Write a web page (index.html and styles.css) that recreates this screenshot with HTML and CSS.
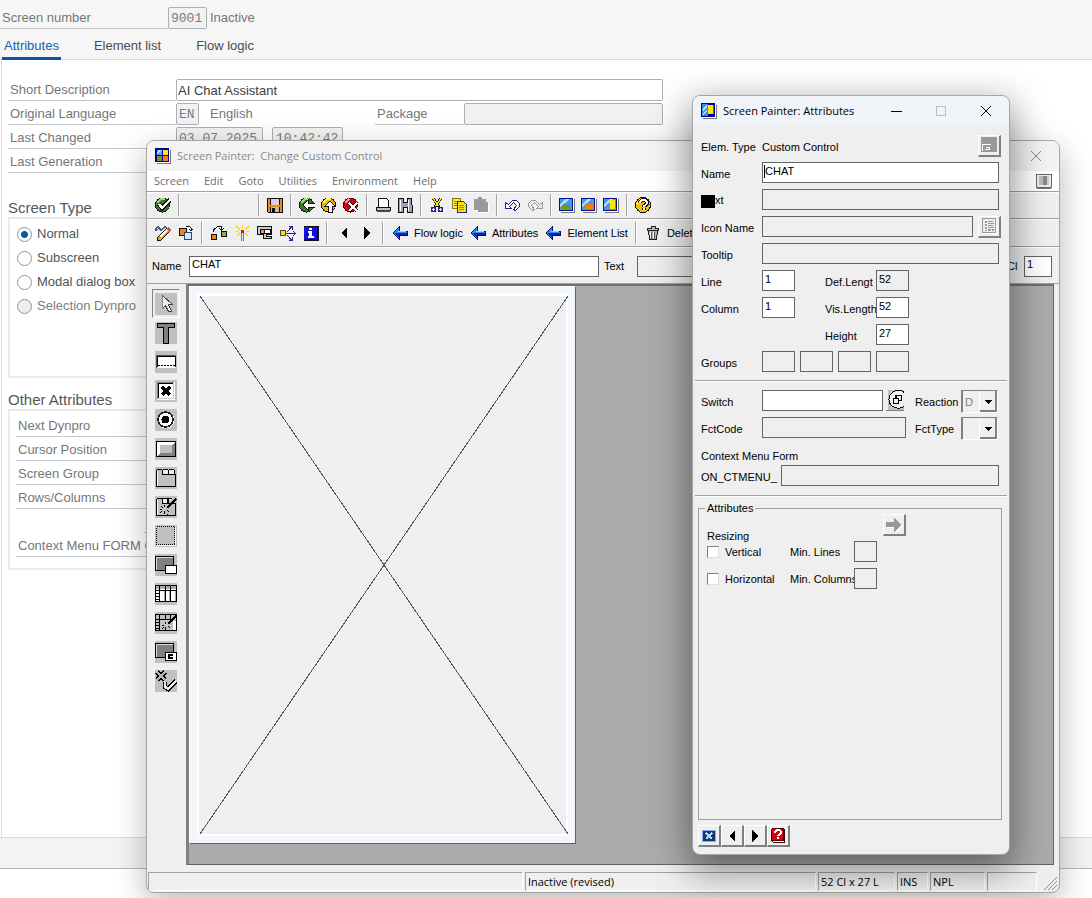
FILE: index.html
```html
<!DOCTYPE html>
<html lang="en">
<head>
<meta charset="utf-8">
<title>Screen Painter</title>
<link rel="stylesheet" href="styles.css">
</head>
<body>
<svg class="sprite" aria-hidden="true">
  <defs>
    <symbol id="i-app" viewBox="0 0 16 16"><path fill="#777" d="M2 2h14v14H2z"/><path fill="#fff" d="M0 0h15v15H0z"/><path fill="#00009f" d="M0 0h14v14H0z"/><path fill="#4aa8f4" d="M2 2h5v5H2z"/><path fill="#d5efff" d="M2 6V4l2-2h2z"/><path fill="#ffe600" d="M8 2h5v5H8z"/><path fill="#7aa000" d="M2 8h5v5H2z"/><path fill="#ff7a00" d="M8 8h5v5H8z"/></symbol>
    <symbol id="i-app2" viewBox="0 0 16 16"><path fill="#777" d="M2 2h14v14H2z"/><path fill="#fff" d="M0 0h15v15H0z"/><path fill="#00009f" d="M0 0h14v14H0z"/><path fill="#2f8fe8" d="M1 1h6v12H1z"/><path fill="#b5e0ff" d="M2 5l4-3v2L2 8zM2 10l4-3v2l-4 3z"/><path fill="#ffe600" d="M7 2h5v9H7z"/><path fill="#7a6000" d="M7 11h6V2h-1v9z"/></symbol>
    <symbol id="i-check" viewBox="0 0 16 16"><circle cx="7.500" cy="8" r="7.500" fill="#111"/><circle cx="7.500" cy="8" r="6.500" fill="#2f7d20"/><path d="M2 6l4-4h4" stroke="#9ad27a" fill="none" stroke-width="2"/><path d="M4 7l3 4 8-8" stroke="#111" stroke-width="4.500" fill="none"/><path d="M4 7l3 4 8-8" stroke="#fff" stroke-width="2.500" fill="none"/></symbol>
    <symbol id="i-save" viewBox="0 0 16 16"><path d="M0 1h16v15H1l-1-1z" fill="#111"/><path d="M1 2h2v13H1zM13 2h2v13h-2zM3 8h10v2H3z" fill="#f08a10"/><path d="M4 2h8v6H4z" fill="#d7d0e8"/><path d="M4 10h8v5H4z" fill="#bbb"/><path d="M5 11h3v4H5z" fill="#111"/></symbol>
    <symbol id="i-back" viewBox="0 0 16 16"><circle cx="7.500" cy="8" r="7.500" fill="#111"/><circle cx="7.500" cy="8" r="6.500" fill="#2f7d20"/><path d="M2 6l4-4h4" stroke="#a8dc80" fill="none" stroke-width="2"/><path d="M4 8l5-5v3h7v4H9v3z" fill="#fff" stroke="#111"/></symbol>
    <symbol id="i-exit" viewBox="0 0 16 16"><circle cx="7.500" cy="8" r="7.500" fill="#111"/><circle cx="7.500" cy="8" r="6.500" fill="#f0b400"/><path d="M2 6l4-4h4" stroke="#fff36a" fill="none" stroke-width="2"/><path d="M9 4l5 5h-3v6H7V9H4z" fill="#fff" stroke="#111"/></symbol>
    <symbol id="i-cancel" viewBox="0 0 16 16"><circle cx="7.500" cy="8" r="7.500" fill="#400"/><circle cx="7.500" cy="8" r="6.500" fill="#d80010"/><path d="M2 6l4-4" stroke="#ff9090" fill="none" stroke-width="2"/><path d="M6 6l8 8M14 6l-8 8" stroke="#111" stroke-width="3.500"/><path d="M6 6l8 8M14 6l-8 8" stroke="#fff" stroke-width="2"/></symbol>
    <symbol id="i-print" viewBox="0 0 16 16"><path d="M3 1h8l2 2v7H3z" fill="#fff" stroke="#111"/><path d="M1 10h14v3H1z" fill="#b9bdd8" stroke="#111"/><path d="M2 13h13v2H2z" fill="#444"/></symbol>
    <symbol id="i-find" viewBox="0 0 16 16"><path d="M2 1h4v4h4V1h4l1 7v7h-5v-5H6v5H1V8z" fill="#9aa0c0" stroke="#111"/><path d="M3 3h1v11H3zM11 3h1v11h-1z" fill="#fff"/></symbol>
    <symbol id="i-cut" viewBox="0 0 16 16"><path d="M4 1l6 9M12 1L6 10" stroke="#111" stroke-width="3"/><path d="M4 1l5 8M12 1L7 9" stroke="#ffe100" stroke-width="1.500"/><circle cx="4.500" cy="12.500" r="2" fill="none" stroke="#24248c" stroke-width="1.500"/><circle cx="11.500" cy="12.500" r="2" fill="none" stroke="#24248c" stroke-width="1.500"/></symbol>
    <symbol id="i-copy" viewBox="0 0 16 16"><path d="M1.500 1.500h8v10h-8z" fill="#ffe75a" stroke="#8a7800"/><path d="M3 4.500h5M3 6.500h3M3 8.500h3" stroke="#8a7800"/><path d="M6.500 4.500h6l3 3v8h-9z" fill="#ffe100" stroke="#24248c"/><path d="M8 8.500h5M8 10.500h5M8 12.500h5" stroke="#a08800"/></symbol>
    <symbol id="i-paste" viewBox="0 0 16 16"><path d="M2 3h4V1h4v2h4v3h2v10H6v-2H2z" fill="#fff"/><path d="M1 2h4V0h4v2h4v3h2v10H5v-2H1z" fill="#999"/></symbol>
    <symbol id="i-undo" viewBox="0 0 16 16"><path d="M.5 5.500v6h6l-2-2 4-4 3 3-3 4 2 1 4-4v-3l-3-3h-4l-4 4z" fill="#fff" stroke="#24248c"/></symbol>
    <symbol id="i-redo" viewBox="0 0 16 16"><path d="M15.500 5.500v6h-6l2-2-4-4-3 3 3 4-2 1-4-4v-3l3-3h4l4 4z" fill="#eee" stroke="#999"/></symbol>
    <symbol id="i-win" viewBox="0 0 16 16"><path d="M2 2h14v14H2z" fill="#777"/><path d="M0 1h15v14H0z" fill="#fff"/><path d="M0 1h14v13H0z" fill="#00108c"/><path d="M1 2h12v11H1z" fill="#3f9cf0"/><path d="M1 7l6-5h4L1 10z" fill="#b5dcff"/></symbol>
    <symbol id="i-help" viewBox="0 0 16 16"><circle cx="8" cy="8" r="8" fill="#111"/><circle cx="8" cy="8" r="7" fill="#f4c000"/><path d="M2 7l4-5" stroke="#fff" stroke-width="2"/><path d="M5 6c0-4 7-4 7 0 0 2-3 2-3 4M9 11v2" fill="none" stroke="#111" stroke-width="4"/><path d="M5 6c0-4 7-4 7 0 0 2-3 2-3 4M9 11v2" fill="none" stroke="#fff" stroke-width="2"/></symbol>
    <symbol id="i-edit" viewBox="0 0 16 16"><path d="M0 4l3-2 3 3 4-3 2 1M0 6l2-2" stroke="#557" stroke-width="1.500" fill="none"/><path d="M3 12L12 3l3 3-9 9-4 1z" fill="#f0a020" stroke="#111"/><path d="M11 4l2-2 3 3-2 2z" fill="#d05050"/><path d="M5 12l7-7" stroke="#fff" stroke-width="1.500"/></symbol>
    <symbol id="i-swap" viewBox="0 0 16 16"><path d="M1.500 3.500h7v7h-7z" fill="#f08a10" stroke="#111"/><path d="M6.500 7.500h7v7h-7z" fill="#d5e6ff" stroke="#24487c"/><path d="M8 2c3-2 6 0 5 4M11 4l2 2 2-2" fill="none" stroke="#111"/></symbol>
    <symbol id="i-flow" viewBox="0 0 16 16"><path d="M.5 9.500h5v5h-5z" fill="#f08a10" stroke="#111"/><path d="M10.500 6.500h5v5h-5z" fill="#8ab040" stroke="#111"/><path d="M2.500 7V5l4-3.500h4V4M8 3l2.500 2L13 3" fill="none" stroke="#111"/></symbol>
    <symbol id="i-wand" viewBox="0 0 16 16"><path d="M8.500 0v4M2 1l4 4M15 1l-4 4M1 6.500h4M12 6.500h4M3 11l3-3M14 11l-3-3" stroke="#ffe800" stroke-width="1.500"/><path d="M7 8h3v8H7z" fill="#777"/><path d="M8 8h1v8H8z" fill="#d5f0ff"/><path d="M7 5h3v3H7z" fill="#e01010"/></symbol>
    <symbol id="i-clamp" viewBox="0 0 16 16"><path d="M.5 1.500h14v8h-5v2h5v2h-8v-4h-6z" fill="#c5c9de" stroke="#111"/><path d="M3.500 4.500h10v4h-10z" fill="#fff" stroke="#111"/><path d="M4 5h3v3H4z" fill="#f09030"/><path d="M7.500 4v4" stroke="#111"/></symbol>
    <symbol id="i-net" viewBox="0 0 16 16"><path d="M.5 5.500h5v5h-5z" fill="#ffe100" stroke="#444"/><path d="M6 8.500h9M7 7l4.500-5M7 10l4.500 5M9 1.500h3V5M9 15.500h3V12M13 6l2.500 2.500L13 11" fill="none" stroke="#24248c"/></symbol>
    <symbol id="i-info" viewBox="0 0 16 16"><path d="M1 1h15v15H1z" fill="#111"/><path d="M1 2h13v12H1z" fill="#1010d8"/><path d="M6 3h3v2H6zM5 6h4v5h2v2H5v-2h1V8H5z" fill="#fff"/></symbol>
    <symbol id="i-left" viewBox="0 0 16 16"><path d="M11 2v12L5 8z" fill="#000"/></symbol>
    <symbol id="i-right" viewBox="0 0 16 16"><path d="M5 2v12l6-6z" fill="#000"/></symbol>
    <symbol id="i-arrow" viewBox="0 0 16 16"><path d="M1 8l6-6v4h8v4H7v4z" fill="#2a8cf0" stroke="#00106c"/><path d="M2 8h13v2H7v3z" fill="#1020b0"/><path d="M6 6.500h8" stroke="#9ad6ff"/></symbol>
    <symbol id="i-trash" viewBox="0 0 16 16"><path d="M6.500 1.500h4v2h3v2h-11v-2h4z" fill="#bbb" stroke="#222"/><path d="M3.500 5.500h9l-1 9h-7z" fill="#b7b7c4" stroke="#222"/><path d="M6.500 7v7M9.500 7v7" stroke="#555"/><path d="M5.500 7v6M8.500 7v6" stroke="#fff"/></symbol>
    <symbol id="p-ptr" viewBox="0 0 22 22"><path d="M7.500 2.500v13l3-3 3 6h3l-3-7h4z" fill="#eee" stroke="#444"/><path d="M7.500 2.500v13" stroke="#888"/></symbol>
    <symbol id="p-text" viewBox="0 0 22 22"><path d="M2.500 1.500h17v4h-6v16h-5v-16h-6z" fill="#808080" stroke="#000"/></symbol>
    <symbol id="p-field" viewBox="0 0 22 22"><path d="M1 4h20v13H1z" fill="#fff"/><path d="M1.500 17V4.500H21" fill="none" stroke="#555"/><path d="M2.500 16V5.500H20v10" fill="none" stroke="#000"/><path d="M3 14.500h17" stroke="#000" stroke-dasharray="2 1"/></symbol>
    <symbol id="p-box" viewBox="0 0 22 22"><path d="M2 2h18v18H2z" fill="#fff"/><path d="M2.500 19V2.500H19" fill="none" stroke="#808080"/><path d="M3.500 18V3.500H18" fill="none" stroke="#000"/><path d="M18.500 4v14.500H4" fill="none" stroke="#ccc"/><path d="M7 7l8 8M15 7l-8 8" stroke="#000" stroke-width="3"/></symbol>
    <symbol id="p-radio" viewBox="0 0 22 22"><circle cx="11" cy="11" r="8.500" fill="#fff"/><circle cx="10.500" cy="10.500" r="7.500" fill="#fff" stroke="#222" stroke-width="1.500"/><circle cx="10.500" cy="10.500" r="4" fill="#000"/></symbol>
    <symbol id="p-btn" viewBox="0 0 22 22"><path d="M1.500 3.500h19v15h-19z" fill="#aaa" stroke="#000"/><path d="M2 4h18l-4 4H6v7l-4 3z" fill="#fff"/><path d="M20 4v14H2l4-4h10V8z" fill="#808080"/><path d="M5 7h12v8H5z" fill="#c0c0c0"/></symbol>
    <symbol id="p-tab" viewBox="0 0 22 22"><path d="M1.500 19.500V3.500l1-1h4l1 1v4h13v12z" fill="#c0c0c0" stroke="#000"/><path d="M7.500 7V3.500l1-1h4l1 1V7M13.500 7V3.500l1-1h4l1 1V7" fill="#eee" stroke="#000"/><path d="M2.500 19V4" stroke="#fff"/></symbol>
    <symbol id="p-tabwiz" viewBox="0 0 22 22"><path d="M1.500 19.500V3.500l1-1h4l1 1v4h13v12z" fill="#c0c0c0" stroke="#000"/><path d="M7.500 7V2.500h5V7M13.500 7V2.500h3" fill="#eee" stroke="#000"/><path d="M2.500 19V4" stroke="#fff"/><path d="M21 3l-9 9" stroke="#000" stroke-width="2"/><path d="M5 13.500h2M9.500 9v2M9.500 15v3M5 17l2-2M12 14l2 2M6 10l2 2M12 18h1" stroke="#000"/></symbol>
    <symbol id="p-sub" viewBox="0 0 22 22"><path d="M1.500 1.500h18v18h-18z" fill="none" stroke="#000" stroke-dasharray="1 1"/><path d="M1 20.500h19.500V2" fill="none" stroke="#fff"/></symbol>
    <symbol id="p-cont" viewBox="0 0 22 22"><path d="M.5 2.500h18v14H.5z" fill="#808080" stroke="#000"/><path d="M1.500 16V3.500H18" fill="none" stroke="#ddd"/><path d="M10.500 11.500h11v8h-11z" fill="#fff" stroke="#000"/></symbol>
    <symbol id="p-table" viewBox="0 0 22 22"><path d="M.5 2.500h21v16H.5z" fill="#fff" stroke="#000"/><path d="M1 3h20v3H1z" fill="#aaa"/><path d="M1 7.500h20M4.500 3v16M10.500 3v16M15.500 3v16M1 10.500h3M1 13.500h3M1 16.500h3" stroke="#000"/><path d="M9.500 8v10M14.500 8v10M20.500 8v10" stroke="#aaa"/></symbol>
    <symbol id="p-tabwz" viewBox="0 0 22 22"><path d="M.5 2.500h21v16H.5z" fill="#c0c0c0" stroke="#000"/><path d="M18 9h3v9h-3z" fill="#fff"/><path d="M1 7.500h15M4.500 3v16M10.500 3v5M15.500 3v4M1 10.500h3M1 13.500h3M1 16.500h3" stroke="#000"/><path d="M22 3l-9 9" stroke="#000" stroke-width="2"/><path d="M7 13.500h2M10.500 10v2M10.500 15v3M7 17l2-2M13 14l2 2" stroke="#000"/></symbol>
    <symbol id="p-ctrl" viewBox="0 0 22 22"><path d="M.5 2.500h18v14H.5z" fill="#808080" stroke="#000"/><path d="M1.500 16V3.500H18" fill="none" stroke="#ddd"/><path d="M10.500 11.500h11v8h-11z" fill="#fff" stroke="#000"/><path d="M18 14h-4v3h4" fill="none" stroke="#000" stroke-width="1.500"/></symbol>
    <symbol id="p-ok" viewBox="0 0 22 22"><path d="M2 2l8 8M10 2l-8 8" stroke="#000" stroke-width="4.500"/><path d="M2 2l8 8M10 2l-8 8" stroke="#b5b5b5" stroke-width="2.500"/><path d="M10 12v5l3 2 8-8" fill="none" stroke="#000" stroke-width="4.500"/><path d="M10 12v5l3 2 8-8" fill="none" stroke="#eee" stroke-width="2.500"/></symbol>
    <symbol id="i-layout" viewBox="0 0 16 16"><path d="M.5 1.500h15v13H.5z" fill="#eee" stroke="#666"/><path d="M3 3h4v9H3z" fill="#bbb"/><path d="M7 3h4v9H7z" fill="#888"/><path d="M11 3h2v9h-2z" fill="#ccc"/><path d="M1 15.500h14" stroke="#777"/></symbol>
    <symbol id="i-elem" viewBox="0 0 16 16"><path d="M0 0h16v15H0z" fill="#999"/><path d="M1.500 14V7.500H10M4 12.500h4.500V10H5" fill="none" stroke="#fff"/></symbol>
    <symbol id="i-list" viewBox="0 0 16 16"><path d="M2.500 1.500h13v14h-13z" fill="none" stroke="#fff"/><path d="M1.500.5h13v14h-13z" fill="#eee" stroke="#999"/><path d="M4 3h2v2H4zM4 6h2v2H4zM4 9h2v2H4zM4 12h2v1H4zM7 3h5v1H7zM7 5h6v1H7zM7 7h5v1H7zM7 9h6v1H7zM7 11h3v2H7zM11 11h2v2h-2z" fill="#999"/></symbol>
    <symbol id="i-match" viewBox="0 0 18 20"><path d="M2 0h16v20H2z" fill="#c0c0c0"/><path d="M18 2.500c-4-4-15-2-15 7s11 10 15 7" fill="#eee" stroke="#000"/><path d="M7.500 8.500h5v5h-5zM10 8V5.500h5.500v5H13" fill="none" stroke="#000" stroke-width="1.500"/></symbol>
    <symbol id="i-go" viewBox="0 0 16 16"><path d="M1 7h9V3l6 6-6 6v-4H1z" fill="#fff"/><path d="M0 5h8V1l7 7-7 7v-5H0z" fill="#999"/></symbol>
    <symbol id="i-close" viewBox="0 0 16 16"><path d="M1.500 2.500h13v11h-13z" fill="#15386f" stroke="#8aa8f0"/><path d="M5 5l6 6M11 5l-6 6" stroke="#b5d5ff" stroke-width="1.500"/></symbol>
    <symbol id="i-bookhelp" viewBox="0 0 16 16"><path d="M2 0h12l1 2v13H3l-2-2V1z" fill="#400"/><path d="M2 1h11v11H2z" fill="#d80010"/><path d="M3 13.500h11" stroke="#fff"/><path d="M5 5c0-4 6-4 6 0 0 2-3 1-3 3M8 9v2" fill="none" stroke="#fff" stroke-width="2"/></symbol>
  </defs>
</svg>

<main class="page">
  <header class="head">
    <div class="head-row">
      <label class="lbl" for="scrno">Screen number</label>
      <input class="ro mono w4" id="scrno" value="9001" readonly>
      <span>Inactive</span>
    </div>
    <nav class="tabs">
      <a class="tab active" href="#a">Attributes</a>
      <a class="tab" href="#e">Element list</a>
      <a class="tab" href="#f">Flow logic</a>
    </nav>
  </header>
  <section class="sheet">
    <div class="frow"><label class="lbl" for="sd">Short Description</label><input class="rw" id="sd" value="AI Chat Assistant"></div>
    <div class="frow"><label class="lbl" for="ol">Original Language</label><input class="ro mono w2" id="ol" value="EN" readonly><span class="lang">English</span><label class="lbl pkg" for="pk">Package</label><input class="ro grow" id="pk" readonly></div>
    <div class="frow"><label class="lbl" for="lc">Last Changed</label><input class="ro mono w10" id="lc" value="03.07.2025" readonly><input class="ro mono w8" value="10:42:42" aria-label="Time changed" readonly></div>
    <div class="frow"><label class="lbl" for="lg">Last Generation</label><input class="ro mono w10" id="lg" readonly></div>

    <h2>Screen Type</h2>
    <div class="box types">
      <label><input type="radio" name="t" checked>Normal</label>
      <label><input type="radio" name="t">Subscreen</label>
      <label><input type="radio" name="t">Modal dialog box</label>
      <label class="off"><input type="radio" name="t" disabled>Selection Dynpro</label>
    </div>
    <h2>Other Attributes</h2>
    <div class="box others">
      <span class="lbl">Next Dynpro</span>
      <span class="lbl">Cursor Position</span>
      <span class="lbl">Screen Group</span>
      <span class="lbl">Rows/Columns</span>
      <span class="lbl blank"></span>
      <span class="lbl">Context Menu FORM ON_CTMENU_</span>
    </div>
  </section>
  <footer class="foot"></footer>
</main>

<section class="win painter">
  <div class="titlebar inactive"><svg class="ic16"><use href="#i-app"/></svg><h1>Screen Painter:&nbsp; Change Custom Control</h1><button class="cap" aria-label="Close"><svg class="cap-ic" viewBox="0 0 12 12"><path d="M1 1l10 10M11 1L1 11"/></svg></button></div>
  <nav class="menubar"><a href="#s">Screen</a><a href="#ed">Edit</a><a href="#g">Goto</a><a href="#u">Utilities</a><a href="#en">Environment</a><a href="#h">Help</a><svg class="ic16 end"><use href="#i-layout"/></svg></nav>
  <div class="bar first">
    <button aria-label="Enter"><svg><use href="#i-check"/></svg></button><i class="sep"></i><input class="cmd" aria-label="Command"><i class="sep"></i>
    <button aria-label="Save"><svg><use href="#i-save"/></svg></button><i class="sep"></i>
    <button aria-label="Back"><svg><use href="#i-back"/></svg></button><button aria-label="Exit"><svg><use href="#i-exit"/></svg></button><button aria-label="Cancel"><svg><use href="#i-cancel"/></svg></button><i class="sep"></i>
    <button aria-label="Print"><svg><use href="#i-print"/></svg></button><button aria-label="Find"><svg><use href="#i-find"/></svg></button><i class="sep"></i>
    <button aria-label="Cut"><svg><use href="#i-cut"/></svg></button><button aria-label="Copy"><svg><use href="#i-copy"/></svg></button><button aria-label="Paste"><svg><use href="#i-paste"/></svg></button><i class="sep"></i>
    <button aria-label="Undo"><svg><use href="#i-undo"/></svg></button><button aria-label="Redo"><svg><use href="#i-redo"/></svg></button><i class="sep"></i>
    <button aria-label="Layout 1"><svg viewBox="0 0 16 16"><use href="#i-win"/><path d="M3 8h8v4H3z" fill="#7a9800"/></svg></button><button aria-label="Layout 2"><svg viewBox="0 0 16 16"><use href="#i-win"/><path d="M4 7h8v5H4z" fill="#ff7a00"/></svg></button><button aria-label="Layout 3"><svg viewBox="0 0 16 16"><use href="#i-win"/><path d="M7 3h5v9H7z" fill="#ffe600"/></svg></button><i class="sep"></i>
    <button aria-label="Help"><svg><use href="#i-help"/></svg></button>
  </div>
  <div class="bar second">
    <button aria-label="Change"><svg><use href="#i-edit"/></svg></button><button aria-label="Other object"><svg><use href="#i-swap"/></svg></button><i class="sep"></i>
    <button aria-label="Check"><svg><use href="#i-flow"/></svg></button><button aria-label="Activate"><svg><use href="#i-wand"/></svg></button><button aria-label="Test"><svg><use href="#i-clamp"/></svg></button><button aria-label="Where used"><svg><use href="#i-net"/></svg></button><button aria-label="Information"><svg><use href="#i-info"/></svg></button><i class="sep"></i>
    <button aria-label="Previous"><svg><use href="#i-left"/></svg></button><button aria-label="Next"><svg><use href="#i-right"/></svg></button><i class="sep"></i>
    <button><svg><use href="#i-arrow"/></svg>Flow logic</button><button><svg><use href="#i-arrow"/></svg>Attributes</button><button><svg><use href="#i-arrow"/></svg>Element List</button><i class="sep"></i>
    <button><svg><use href="#i-trash"/></svg>Delete</button>
  </div>
  <div class="namebar">
    <label for="nm">Name</label><input id="nm" class="in nm" value="CHAT">
    <label for="tx" class="txl">Text</label><input id="tx" class="in dis tx" readonly>
    <label for="cl">Cl</label><input id="cl" class="in cl" value="1">
  </div>
  <div class="work">
    <div class="palette">
      <button class="on" aria-label="Pointer"><svg><use href="#p-ptr"/></svg></button>
      <button aria-label="Text field"><svg><use href="#p-text"/></svg></button>
      <button aria-label="Input field"><svg><use href="#p-field"/></svg></button>
      <button aria-label="Checkbox"><svg><use href="#p-box"/></svg></button>
      <button aria-label="Radio button"><svg><use href="#p-radio"/></svg></button>
      <button aria-label="Pushbutton"><svg><use href="#p-btn"/></svg></button>
      <button aria-label="Tabstrip"><svg><use href="#p-tab"/></svg></button>
      <button aria-label="Tabstrip wizard"><svg><use href="#p-tabwiz"/></svg></button>
      <button aria-label="Box"><svg><use href="#p-sub"/></svg></button>
      <button aria-label="Subscreen"><svg><use href="#p-cont"/></svg></button>
      <button aria-label="Table control"><svg><use href="#p-table"/></svg></button>
      <button aria-label="Table wizard"><svg><use href="#p-tabwz"/></svg></button>
      <button aria-label="Custom control"><svg><use href="#p-ctrl"/></svg></button>
      <button aria-label="Status icon"><svg><use href="#p-ok"/></svg></button>
    </div>
    <div class="canvas">
      <div class="form"><svg class="cross" viewBox="0 0 100 100" preserveAspectRatio="none"><path d="M0 0L100 100M100 0L0 100"/></svg></div>
    </div>
  </div>
  <div class="status"><span class="s1"></span><span class="s2">Inactive (revised)</span><span class="s3">52 Cl x 27 L</span><span class="s4">INS</span><span class="s5">NPL</span><span class="s6"></span><svg class="grip" viewBox="0 0 16 16"><path d="M2 15L15 2M6 15l9-9M10 15l5-5"/></svg></div>
</section>

<section class="win attrs">
  <div class="titlebar"><svg class="ic16"><use href="#i-app2"/></svg><h1>Screen Painter: Attributes</h1>
    <button class="cap" aria-label="Minimize"><svg class="cap-ic" viewBox="0 0 12 12"><path d="M1 6.500h11"/></svg></button>
    <button class="cap faint" aria-label="Maximize"><svg class="cap-ic" viewBox="0 0 12 12"><rect x="1.500" y="1.500" width="9" height="9"/></svg></button>
    <button class="cap" aria-label="Close"><svg class="cap-ic" viewBox="0 0 12 12"><path d="M1 1l10 10M11 1L1 11"/></svg></button></div>
  <div class="rows">
    <div class="r"><span class="k">Elem. Type</span><span class="grow val">Custom Control</span><button class="sq" aria-label="Element type"><svg><use href="#i-elem"/></svg></button></div>
    <div class="r"><label class="k" for="a1">Name</label><span class="caret grow"><input id="a1" class="in grow" value="CHAT"></span></div>
    <div class="r"><label class="k" for="a2"><b class="blk"></b>xt</label><input id="a2" class="in dis grow" readonly></div>
    <div class="r"><label class="k" for="a3">Icon Name</label><input id="a3" class="in dis grow" readonly><button class="sq" aria-label="Icon list"><svg><use href="#i-list"/></svg></button></div>
    <div class="r"><label class="k" for="a4">Tooltip</label><input id="a4" class="in dis grow" readonly></div>
    <div class="r"><label class="k" for="a5">Line</label><input id="a5" class="in n" value="1"><label class="k2" for="a6">Def.Lengt</label><input id="a6" class="in dis n" value="52" readonly></div>
    <div class="r"><label class="k" for="a7">Column</label><input id="a7" class="in n" value="1"><label class="k2" for="a8">Vis.Length</label><input id="a8" class="in n" value="52"></div>
    <div class="r"><span class="k"></span><span class="n"></span><label class="k2" for="a9">Height</label><input id="a9" class="in n" value="27"></div>
    <div class="r groups"><span class="k">Groups</span><input class="in dis n" aria-label="Group 1" readonly><input class="in dis n" aria-label="Group 2" readonly><input class="in dis n" aria-label="Group 3" readonly><input class="in dis n" aria-label="Group 4" readonly></div>
  </div>
  <hr>
  <div class="rows second-rows">
    <div class="r"><label class="k" for="b1">Switch</label><span class="swf"><input id="b1" class="in grow"><button class="match" aria-label="Value help"><svg><use href="#i-match"/></svg></button></span><label class="k3" for="b2">Reaction</label><select id="b2" class="sel"><option>D</option></select></div>
    <div class="r"><label class="k" for="b3">FctCode</label><span class="swf"><input id="b3" class="in dis grow" readonly></span><label class="k3" for="b4">FctType</label><select id="b4" class="sel"><option></option></select></div>
    <div class="r"><span class="val">Context Menu Form</span></div>
    <div class="r ctx"><label class="k" for="b5">ON_CTMENU_</label><input id="b5" class="in dis grow" readonly></div>
  </div>
  <hr>
  <fieldset>
    <legend>Attributes</legend>
    <button class="sq go" aria-label="Continue"><svg><use href="#i-go"/></svg></button>
    <p>Resizing</p>
    <div class="z"><label class="ck"><input type="checkbox">Vertical</label><label class="k4" for="c1">Min. Lines</label><input id="c1" class="in dis" readonly></div>
    <div class="z"><label class="ck"><input type="checkbox">Horizontal</label><label class="k4" for="c2">Min. Columns</label><input id="c2" class="in dis" readonly></div>
  </fieldset>
  <div class="btns"><button class="sq" aria-label="Close"><svg><use href="#i-close"/></svg></button><button class="sq" aria-label="Previous"><svg><use href="#i-left"/></svg></button><button class="sq" aria-label="Next"><svg><use href="#i-right"/></svg></button><button class="sq" aria-label="Help"><svg><use href="#i-bookhelp"/></svg></button></div>
</section>
</body>
</html>
```
FILE: styles.css
```css
* { box-sizing: border-box; }
html, body { height: 100%; margin: 0; }
body { position: relative; overflow: hidden; background: #fff; font: 13px/16px "Liberation Sans", Arial, sans-serif; color: #74777a; }
h1, h2, p { margin: 0; font-weight: normal; }
a { color: inherit; text-decoration: none; }
button { font: inherit; color: inherit; background: none; border: 0; padding: 0; margin: 0; }
input { font: inherit; color: inherit; margin: 0; border-radius: 0; outline: 0; min-width: 0; }
.sprite { position: absolute; width: 0; height: 0; }
.grow { flex: 1; }

/* page behind the windows */
.page { display: flex; flex-direction: column; height: 100%; padding-bottom: 29px; }
.head { background: #f6f6f6; border-bottom: 1px solid #d9d9d9; }
.head-row { display: flex; align-items: center; height: 29px; padding-top: 7px; }
.head-row .lbl { width: 168px; padding-left: 2px; }
.head-row span { padding-left: 3px; }
.lbl { height: 22px; line-height: 22px; border-bottom: 1px solid #c4c7ca; white-space: nowrap; flex: none; }
.ro, .rw { height: 22px; padding: 0 2px; border: 1px solid #a9b0b8; border-radius: 2px; background: #f2f2f2; color: #7b7b7b; }
.rw { background: #fff; color: #3a3d40; flex: 1; padding: 0 1px; }
.mono { font-family: "Liberation Mono", monospace; }
.w2 { width: 23px; }
.w4 { width: 39px; }
.w8 { width: 71px; margin-left: 9px; padding: 0 3px; }
.w10 { width: 87px; }
.tabs { display: flex; gap: 31px; height: 30px; padding-left: 2px; color: #4a4d50; }
.tab { height: 31px; padding: 9px 2px 0 2px; }
.active { color: #1661ae; border-bottom: 3px solid #0a56a5; }
.sheet { flex: 1; min-height: 0; margin-left: 1px; padding: 18px 7px; border-left: 1px solid #dcdcdc; }
.frow { display: flex; align-items: center; height: 24px; width: 655px; max-width: 100%; margin-left: -1px; }
.frow .lbl { width: 168px; padding-left: 2px; }
.lang { width: 176px; padding-left: 11px; }
.frow .pkg { width: 89px; }
h2 { font-size: 15px; line-height: 18px; color: #54575a; }
.sheet h2 { margin: 25px 0 0 -1px; }
.box { width: 400px; margin: 0 0 0 -1px; border: 2px solid #ebebeb; }
.types { height: 161px; padding: 3px 7px; color: #515456; }
.types label { display: flex; align-items: center; gap: 5px; height: 24px; }
.types input { appearance: none; width: 15px; height: 15px; border: 1px solid #8d969f; border-radius: 50%; background: #fff; }
.types input:checked { background: radial-gradient(circle, #0a56a5 3px, #fff 4px); }
.types input:disabled { background: #eee; }
.types .off { color: #7b7e81; }
.sheet .box + h2 { margin-top: 13px; }
.others { display: flex; flex-direction: column; gap: 2px; padding: 4px 6px 11px; }
.others .lbl { padding-left: 2px; }
.others .blank { margin-left: 128px; }
.foot { flex: none; height: 32px; background: #f3f3f3; border-top: 1px solid #d9d9d9; border-bottom: 1px solid #b5b5b5; }

/* shared window parts */
.win { position: absolute; display: flex; flex-direction: column; overflow: hidden; border: 1px solid #a6a6a6; border-radius: 8px; background: #efefef; color: #000; font: 11px/14px "Liberation Sans", Arial, sans-serif; }
.titlebar { display: flex; align-items: center; flex: none; height: 30px; padding-left: 8px; background: #f0f3f8; }
.titlebar h1 { flex: 1; padding-left: 6px; font: 11px/16px "Open Sans", "Noto Sans", sans-serif; white-space: nowrap; }
.inactive { background: #f3f3f3; color: #8a8a8a; }
.ic16, .bar svg, .sq svg { width: 16px; height: 16px; flex: none; }
.ic16, .bar svg, .sq svg, .match svg, .palette svg { shape-rendering: crispEdges; }
.cap { width: 46px; height: 28px; display: flex; align-items: center; justify-content: center; }
.cap-ic { width: 12px; height: 12px; fill: none; stroke: currentColor; }
.faint { color: #bcbcbc; }
.in { height: 21px; padding: 0 2px 4px; border: 1px solid #646464; background: #fff; }
.dis { background: #efefef; }

/* painter window */
.painter { inset: 140px 32px 5px 146px; box-shadow: 0 10px 32px rgba(0,0,0,.28); }
.menubar { display: flex; align-items: center; flex: none; gap: 15px; height: 20px; padding: 0 7px; background: #fff; color: #6e6e6e; font: 11px/16px "Open Sans", "Noto Sans", sans-serif; }
.menubar .end { margin-left: auto; }
.bar { display: flex; align-items: center; flex: none; height: 28px; padding-left: 8px; gap: 6px; border-top: 1px solid #a0a0a0; box-shadow: inset 0 1px #fff; white-space: nowrap; }
.first { height: 27px; }
.bar button { display: flex; align-items: center; gap: 6px; flex: none; }
.bar + .second { gap: 7px; }
.sep { flex: none; width: 2px; height: 22px; margin: 0 1px; border-left: 1px solid #a0a0a0; border-right: 1px solid #fff; }
.second .sep { margin: 0 1px 0 0; }
.cmd { width: 64px; height: 20px; border: 0; background: #efefef; }
.namebar { display: flex; align-items: center; flex: none; height: 37px; padding: 2px 7px 0 5px; gap: 5px; border-top: 1px solid #a0a0a0; box-shadow: inset 0 1px #fff; }
.namebar label { flex: none; width: 32px; }
.namebar .txl { width: 28px; }
.namebar label:last-of-type { width: 12px; }
.nm { width: 410px; }
.tx { flex: 1; }
.cl { width: 28px; }
.work { display: flex; flex: 1; min-height: 0; border-top: 1px solid #a0a0a0; }
.palette { width: 39px; flex: none; display: flex; flex-direction: column; align-items: center; padding: 5px 2px 0 0; }
.palette button { display: flex; align-items: center; justify-content: center; width: 28px; height: 29px; flex: none; }
.palette .on { border: 1px solid #808080; border-right-color: #fff; border-bottom-color: #fff; }
.palette svg { width: 22px; height: 22px; background: #c0c0c0; }
.canvas { flex: 1; margin-right: 5px; border: 1px solid #646464; border-left: 3px solid #808080; border-top: 2px solid #707070; background: #ababab; }
.form { width: 387px; height: 558px; max-height: 100%; padding: 9px 7px 9px 10px; border: 1px solid #fff; border-right-color: #646464; border-bottom-color: #646464; background: #efefef; box-shadow: inset 0 0 0 7px #f3f7fc, inset 0 0 0 9px #fff; }
.cross { display: block; width: 100%; height: 100%; fill: none; stroke: #555; shape-rendering: crispEdges; }
.cross path { vector-effect: non-scaling-stroke; }
.status { display: flex; flex: none; gap: 2px; height: 27px; padding: 7px 1px 1px; font: 11px/17px "Open Sans", "Noto Sans", sans-serif; }
.status span { padding-left: 2px; border: 1px solid #a0a0a0; border-right-color: #fff; border-bottom-color: #fff; white-space: nowrap; }
.s1 { flex: 376; }
.s2 { flex: 291; }
.s3 { width: 77px; }
.s4 { width: 31px; }
.s5 { width: 55px; }
.s6 { width: 50px; }
.grip { width: 16px; height: 16px; margin: 3px 0 0 3px; flex: none; fill: none; stroke: #8c8c8c; }

/* attributes window */
.attrs { width: 318px; inset: 95px 82px 43px auto; box-shadow: 0 12px 36px 4px rgba(0,0,0,.42); }
.attrs .titlebar { padding: 0 1px 0 8px; }
.attrs .cap { width: 45px; }
.rows { padding: 6px 10px 0 8px; flex: none; }
.second-rows { padding-top: 5px; }
.r { display: flex; align-items: center; height: 27px; }
.k, .k2, .k3, .val { padding-top: 2px; }
.k { flex: none; width: 61px; white-space: nowrap; }
.k2 { width: 51px; margin-left: 30px; white-space: nowrap; }
.k3 { width: 46px; margin-left: 9px; }
.n { width: 33px; flex: none; }
.groups { gap: 5px; }
.groups .k { width: 56px; }
.blk { display: inline-block; width: 14px; height: 13px; background: #000; vertical-align: middle; }
.caret { display: flex; position: relative; }
.caret::before { content: ""; position: absolute; left: 2px; top: 3px; width: 1px; height: 13px; background: #000; }
.sq { display: flex; align-items: center; justify-content: center; width: 23px; height: 22px; flex: none; border: 1px solid #fff; border-right: 2px solid #808080; border-bottom: 2px solid #808080; }
.r .sq { margin: 0 -2px 0 5px; }
.attrs hr { width: 312px; height: 2px; flex: none; margin: 5px 2px 0; border: 0; border-top: 1px solid #a0a0a0; background: #fff; }
.swf { display: flex; width: 144px; gap: 3px; align-items: center; }
.match { display: flex; margin-right: 2px; border-bottom: 1px solid #808080; }
.match svg { width: 18px; height: 20px; }
.sel { appearance: none; width: 37px; height: 23px; margin-top: 2px; padding: 0 0 0 3px; border: 1px solid #808080; border-right-color: #fff; border-bottom-color: #fff; border-radius: 0; color: #808080; font: inherit; background: linear-gradient(#000, #000) right 5px top 9px / 7px 1px no-repeat, linear-gradient(#000, #000) right 6px top 10px / 5px 1px no-repeat, linear-gradient(#000, #000) right 7px top 11px / 3px 1px no-repeat, linear-gradient(#000, #000) right 8px top 12px / 1px 1px no-repeat, linear-gradient(#808080, #808080) right 0 top 0 / 2px 100% no-repeat, linear-gradient(#808080, #808080) right 0 bottom 0 / 17px 2px no-repeat, linear-gradient(#fff, #fff) right 17px top 0 / 1px 100% no-repeat, linear-gradient(#808080, #808080) left 0 top 0 / 1px 100% no-repeat, #efefef; }
.ctx { height: 21px; margin: -3px 0 4px; }
.ctx .k { width: 80px; }
fieldset { position: relative; flex: 1; min-height: 0; min-width: 0; margin: 4px 7px 5px 5px; padding: 14px 6px 0 8px; border: 1px solid #a0a0a0; }
legend { padding: 0 2px; margin-left: -2px; }
fieldset p { margin-bottom: -5px; }
.go { position: absolute; left: 184px; top: -1px; }
.z { display: flex; align-items: center; height: 27px; }
.ck { display: flex; align-items: center; gap: 6px; width: 83px; }
.ck input { appearance: none; width: 12px; height: 12px; border: 1px solid #808080; border-right-color: #ddd; border-bottom-color: #ddd; background: #fff; }
.k4 { width: 64px; white-space: nowrap; }
.z .in { width: 23px; position: relative; }
.btns { display: flex; flex: none; padding: 0 5px 7px; }
```
